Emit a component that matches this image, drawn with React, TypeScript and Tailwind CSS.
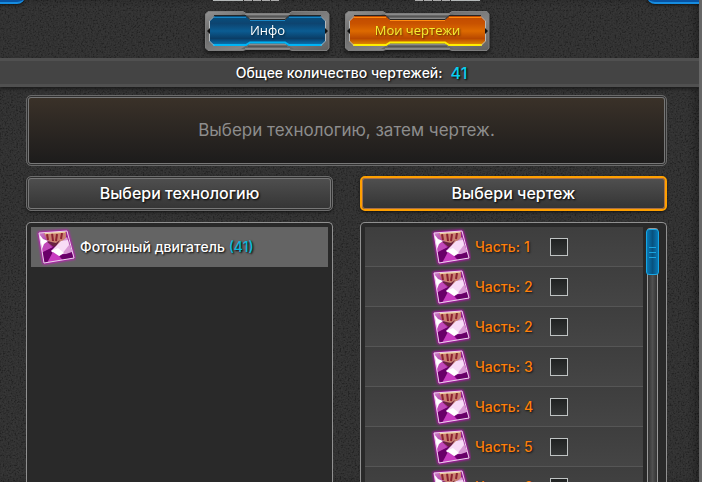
import React, { useId, useState } from 'react';

const wide = "font-['Inter','DejaVu_Sans',sans-serif]";

function Grain() {
  return (
    <svg className="pointer-events-none absolute inset-0 h-full w-full opacity-[0.07]" aria-hidden="true">
      <filter id="grain">
        <feTurbulence type="fractalNoise" baseFrequency="0.6" numOctaves="2" seed="4" />
        <feColorMatrix values="2.4 0 0 0 -0.7  2.4 0 0 0 -0.7  2.4 0 0 0 -0.7  0 0 0 0 1" />
      </filter>
      <rect width="100%" height="100%" filter="url(#grain)" />
    </svg>
  );
}

type Tone = { stops: string[]; top: string; bottom: string };
const blue: Tone = { stops: ['#07507f', '#0d4470', '#0b5c92', '#0a3d66', '#0880c4'], top: '#1785c4', bottom: '#00b4f5' };
const orange: Tone = { stops: ['#c04a00', '#c85200', '#dd6a00', '#b84800', '#ec9a00'], top: '#ff8a10', bottom: '#ffee00' };

function Frame({ w, tone }: { w: number; tone: Tone }) {
  const id = useId();
  const r = w - 1;
  const body = `M9 5H41L45 9H${w - 45}L${w - 41} 5H${w - 9}L${w - 4} 10V30L${w - 9} 35H${w - 41}L${w - 45} 32H45L41 35H9L4 30V10Z`;
  return (
    <svg viewBox={`0 0 ${w} 40`} className="absolute inset-0 h-full w-full" aria-hidden="true">
      <defs>
        <linearGradient id={id + 'f'} x1="0" y1="0" x2="0" y2="1">
          {tone.stops.map((c, i) => <stop key={i} offset={i / 4} stopColor={c} />)}
        </linearGradient>
        <linearGradient id={id + 'm'} x1="0" y1="0" x2="1" y2="1">
          <stop offset="0" stopColor="#929292" />
          <stop offset="0.3" stopColor="#686868" />
          <stop offset="0.6" stopColor="#858585" />
          <stop offset="1" stopColor="#606060" />
        </linearGradient>
      </defs>
      <path d={`M3 .5H38L41 2.5H${w - 41}L${w - 38} .5H${r - 2}L${r} 3V37L${r - 2} 39.5H${w - 38}L${w - 41} 38.5H41L38 39.5H3L.5 37V3Z`} fill={`url(#${id}m)`} stroke="#7e7e7e" />
      <path d={`M36 3H${w - 36}L${w - 45} 9H45ZM45 32H${w - 45}L${w - 36} 38H36Z`} fill="#686868" />
      <path d={`M40 3.5H${w - 40}M44 7.5H${w - 44}M44 33.5H${w - 44}M40 37.5H${w - 40}`} stroke="#8a8a8a" />
      <path d={`M43 5.5H${w - 43}M43 35.5H${w - 43}`} stroke="#555" />
      <path d={body} fill={`url(#${id}f)`} />
      <path d={`M9 4.5H41L45 8.5H${w - 45}L${w - 41} 4.5H${w - 9}`} fill="none" stroke="#242424" />
      <path d={`M45 9.5H${w - 45}M9 6.5H41M${w - 41} 6.5H${w - 9}`} fill="none" stroke={tone.top} />
      <path d={`M8 34H41L45 31.5H${w - 45}L${w - 41} 34H${w - 8}`} fill="none" stroke={tone.bottom} strokeWidth="2" />
      <path d={`M9 5.5L4.500 10V30L9 34.500M${w - 9} 5.500L${w - 4.5} 10V30L${w - 9} 34.500`} fill="none" stroke="#b4b8ba" />
      <path d={`M2 20L5 17V23ZM${w - 2} 20L${w - 5} 17V23Z`} fill="#111" />
    </svg>
  );
}

function TabButton({ active = false, children }: { active?: boolean; children: React.ReactNode }) {
  return (
    <button
      type="button"
      className={`relative h-10 font-['Open_Sans',sans-serif] text-[13px] font-medium drop-shadow-[0_2px_2px_#111] ${active ? 'w-[145px] text-[#f6ee30]' : 'w-[125px] text-white'}`}
    >
      <Frame w={active ? 145 : 125} tone={active ? orange : blue} />
      <span className="relative [text-shadow:1px_1px_2px_#0009]">{children}</span>
    </button>
  );
}

function Crystal() {
  const id = useId();
  return (
    <svg viewBox="0 0 40 40" className="h-10 w-10 shrink-0" aria-hidden="true">
      <defs>
        <linearGradient id={id + 'c'} x1="0" y1="0" x2="1" y2="1">
          <stop offset="0" stopColor="#e0a0dc" />
          <stop offset="0.4" stopColor="#a02898" />
          <stop offset="0.7" stopColor="#800480" />
          <stop offset="1" stopColor="#b020b0" />
        </linearGradient>
        <clipPath id={id + 'p'}><path d="M3 6L31 4L38 31L8 36Z" /></clipPath>
        <filter id={id + 'g'} x="-30%" y="-30%" width="160%" height="160%"><feGaussianBlur stdDeviation="1.4" /></filter>
        <filter id={id + 's'}><feGaussianBlur stdDeviation="0.35" /></filter>
      </defs>
      <path d="M3 6L31 4L38 31L8 36Z" fill="#e000d8" stroke="#e000d8" strokeWidth="2" filter={`url(#${id}g)`} />
      <g clipPath={`url(#${id}p)`}>
        <path d="M0 0H40V40H0Z" fill={`url(#${id}c)`} />
        <g filter={`url(#${id}s)`}>
          <path d="M7 4H30L30 12L21 18L11 13Z" fill="#c88070" />
          <path d="M11 7L12 13M16 6L17 14M21 7L20 14M26 6L25 12" stroke="#8c2030" strokeWidth="2" />
          <path d="M9 6.500L29 5" stroke="#ecd0a0" strokeWidth="1.500" />
          <path d="M10 14L20 16L24 13L19 21Z" fill="#682040" />
          <path d="M3 13L11 15L17 21L6 27Z" fill="#c048b8" />
          <path d="M3 7L7 12L12 14L8 17L6 22Z" fill="#fff" />
          <path d="M5 26L19 19L12 36H7Z" fill="#6b0069" />
          <path d="M24 16L31 10L37 27L27 27Z" fill="#d898d4" />
          <path d="M15 24L25 14L32 13L33 18L26 27Z" fill="#f8dcf6" />
          <path d="M15 24L22 21L28 26L22 30Z" fill="#fff" />
          <path d="M11 36L17 25L23 29L28 35Z" fill="#c83cc0" />
          <path d="M24 29L36 25L38 31L28 34Z" fill="#680068" />
        </g>
      </g>
      <path d="M3 6L31 4L38 31L8 36Z" fill="none" stroke="#ecd6ec" />
    </svg>
  );
}

function Heading({ active = false, children }: { active?: boolean; children: React.ReactNode }) {
  return (
    <button
      type="button"
      className={`flex h-[35px] w-full shrink-0 items-center justify-center rounded-[5px] bg-linear-to-b from-[#505050] to-[#343434] pb-px text-base font-medium text-white [text-shadow:1px_1px_2px_#000] ${
        active
          ? 'border-2 border-[#ffa000] shadow-[inset_0_0_0_1px_#a87048,0_1px_3px_#111]'
          : 'border border-[#6c6c6c] shadow-[inset_0_0_0_1px_#303030,inset_0_0_0_2px_#777,0_1px_3px_#111]'
      }`}
    >
      {children}
    </button>
  );
}

function Part({ number }: { number: number }) {
  const id = useId();
  const [checked, setChecked] = useState(false);
  return (
    <li className="flex h-10 items-center border-b border-[#565656] bg-linear-to-b from-[#3e3e3e] to-[#454545] pl-[66px]">
      <Crystal />
      <label htmlFor={id} className="ml-1 flex w-[75px] text-sm font-medium text-[#ff7f0a] [text-shadow:1px_1px_2px_#111]">
        <span className="w-[49px]">Часть:</span>
        <span>{number}</span>
      </label>
      <input
        id={id}
        type="checkbox"
        checked={checked}
        onChange={(e) => setChecked(e.target.checked)}
        className="size-[18px] appearance-none border border-[#bfc3c3] bg-linear-to-b from-[#202222] to-[#343636] checked:bg-[#d06800]"
      />
    </li>
  );
}

const parts = [1, 2, 2, 3, 4, 5, 6];

export default function App() {
  return (
    <main className={`relative isolate flex h-screen flex-col overflow-hidden border-r-3 border-[#666] bg-[#272727] ${wide}`}>
      <div className="absolute inset-0 -z-10 shadow-[inset_-5px_0_5px_#1c1c1c]"><Grain /></div>
      <div className="absolute -left-2 -top-5 h-6 w-[33px] rounded-br-lg border-b-2 border-[#168ce0] bg-[#0752a2] shadow-[0_1px_3px_#111]" />
      <div className="absolute -right-2 -top-5 h-6 w-[60px] rounded-bl-lg border-b-2 border-[#168ce0] bg-[#0752a2] shadow-[0_1px_3px_#111]" />
      <div className="absolute left-[213px] top-0 flex h-px gap-px">
        <i className="w-[30px] bg-[#b4b8b8]" /><i className="w-2 bg-[#aaa]" /><i className="w-2 bg-[#aaa]" /><i className="w-2 bg-[#aaa]" /><i className="w-2 bg-[#aaa]" />
      </div>
      <div className="absolute left-[415px] top-0 flex h-px gap-px">
        <i className="w-2 bg-[#aaa]" /><i className="w-2 bg-[#aaa]" /><i className="w-2 bg-[#aaa]" /><i className="w-2 bg-[#aaa]" /><i className="w-[29px] bg-[#b4b8b8]" />
      </div>

      <nav className="flex shrink-0 justify-center gap-[15px] pb-[7px] pr-1 pt-[11px]">
        <TabButton>Инфо</TabButton>
        <TabButton active>Мои чертежи</TabButton>
      </nav>

      <div className="flex h-[29px] shrink-0 items-center justify-center gap-2 border-y-3 border-[#505050] bg-[#444] pl-1 text-sm font-medium text-white shadow-[0_2px_3px_#1c1c1c] [text-shadow:1px_1px_2px_#000]">
        <span>Общее количество чертежей:</span>
        <output className="text-base text-[#08cdf0]">41</output>
      </div>

      <section className="flex min-h-0 flex-1 flex-col pl-[26px] pr-8 pt-2">
        <p className="flex h-[71px] shrink-0 items-center justify-center rounded-[5px] border border-[#6a6a6a] bg-linear-to-b from-[#3b3229] to-[#1c1b1b] text-[17px] text-[#8d8d8d] shadow-[inset_0_0_0_1px_#303030,inset_0_0_0_2px_#777]">
          Выбери технологию, затем чертеж.
        </p>
        <div className="mt-2.5 grid min-h-0 flex-1 grid-cols-2 gap-[27px]">
          <div className="flex min-h-0 flex-col gap-[11px]">
            <Heading>Выбери технологию</Heading>
            <div className="min-h-0 flex-1 rounded-t-[5px] border border-b-0 border-[#909090] bg-[#292929] px-1 pt-1">
              <button type="button" className="flex h-10 w-full items-center bg-[#646464] pl-[5px] text-sm font-medium text-white [text-shadow:1px_1px_2px_#000]">
                <Crystal />
                <span className="ml-1">Фотонный двигатель <span className="text-[#08b9dc]">(41)</span></span>
              </button>
            </div>
          </div>
          <div className="flex min-h-0 flex-col gap-[11px]">
            <Heading active>Выбери чертеж</Heading>
            <div className="flex min-h-0 flex-1 overflow-hidden rounded-t-[5px] border border-b-0 border-[#909090] bg-[#292929] pl-1 pr-[7px] pt-1">
              <ul className="h-0 flex-1">
                {parts.map((n, i) => <Part key={i} number={n} />)}
              </ul>
              <div className="ml-[3px] flex w-[13px] flex-col items-center">
                <button type="button" aria-label="Прокрутка" className="z-10 mt-0.5 flex h-[46px] w-[13px] shrink-0 flex-col items-center justify-center gap-1 rounded-[3px] border border-[#15a7e6] bg-linear-to-r from-[#0878b5] via-[#07527f] to-[#0878b5]">
                  <i className="h-px w-[7px] bg-[#19a4df]" /><i className="h-px w-[7px] bg-[#19a4df]" /><i className="h-px w-[7px] bg-[#19a4df]" />
                </button>
                <div className="-mt-[47px] w-[11px] flex-1 rounded-t-[3px] border border-b-0 border-[#999] bg-linear-to-r from-[#333] via-[#505050] to-[#333]" />
              </div>
            </div>
          </div>
        </div>
      </section>
    </main>
  );
}
